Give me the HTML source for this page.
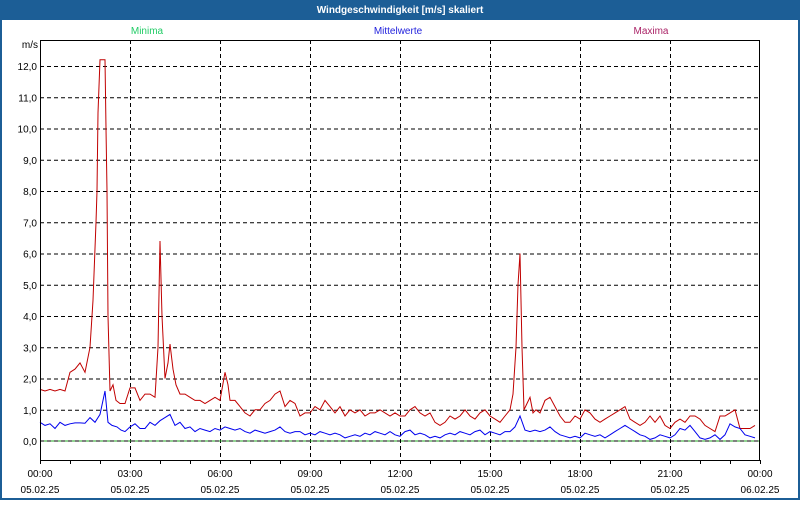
<!DOCTYPE html>
<html><head><meta charset="utf-8"><style>
body{margin:0;width:800px;height:500px;overflow:hidden;background:#fff;font-family:"Liberation Sans",sans-serif}
</style></head><body>
<svg id="s" width="800" height="500" xmlns="http://www.w3.org/2000/svg" font-family="Liberation Sans, sans-serif" font-size="10">
<rect x="0" y="0" width="800" height="500" fill="#1c5e96"/>
<rect x="2" y="20" width="796" height="478" fill="#fff"/>
<text x="400" y="13" fill="#fff" font-weight="bold" font-size="10" text-anchor="middle">Windgeschwindigkeit [m/s] skaliert</text>
<text x="147" y="34" fill="#22cc66" text-anchor="middle">Minima</text>
<text x="398" y="34" fill="#2222dd" text-anchor="middle">Mittelwerte</text>
<text x="651" y="34" fill="#aa2266" text-anchor="middle">Maxima</text>
<text x="38" y="48" text-anchor="end" fill="#000">m/s</text>
<g id="grid"></g>
<line x1="40" y1="441" x2="760" y2="441" stroke="#22aa22" stroke-width="1"/>
<line x1="40" y1="441" x2="760" y2="441" stroke="#000" stroke-dasharray="4,3"/>
<polyline id="red" fill="none" stroke="#c00000" stroke-width="1"/>
<polyline id="blue" fill="none" stroke="#0000ee" stroke-width="1"/>
<rect x="40.5" y="40.5" width="719" height="420" fill="none" stroke="#000"/>
</svg>
<script>
var g=document.getElementById('grid'),h='';
for(var v=0;v<=12;v++){var y=441-v*31.25;
 if(v>0)h+='<line x1="40" y1="'+(y+.5)+'" x2="760" y2="'+(y+.5)+'" stroke="#000" stroke-dasharray="4,3"/>';
 h+='<text x="37" y="'+(y+4)+'" text-anchor="end">'+v+',0</text>';}
var t=['00:00','03:00','06:00','09:00','12:00','15:00','18:00','21:00','00:00'];
for(var k=0;k<=8;k++){var x=40+90*k;
 if(k>0&&k<8)h+='<line x1="'+(x+.5)+'" y1="40" x2="'+(x+.5)+'" y2="460" stroke="#000" stroke-dasharray="4,3"/>';
 h+='<text x="'+x+'" y="477" text-anchor="middle">'+t[k]+'</text><text x="'+x+'" y="493" text-anchor="middle">'+(k==8?'06.02.25':'05.02.25')+'</text>';}
for(var x=40;x<=760;x+=30)h+='<line x1="'+(x+.5)+'" y1="460" x2="'+(x+.5)+'" y2="464" stroke="#000"/>';
g.innerHTML=h;
function pts(a){var s='';for(var i=0;i<a.length;i+=2){s+=a[i]+','+(441-a[i+1]*31.25).toFixed(1)+' ';}return s;}
var R=[40,1.65,45,1.6,50,1.65,55,1.6,60,1.65,65,1.6,70,2.2,75,2.3,80,2.5,85,2.2,90,3,93,4.5,96,7,97,8,98,10.5,100,12.2,105,12.2,106,10,107,8,108,4,110,1.6,113,1.8,116,1.3,120,1.2,125,1.2,130,1.7,135,1.7,140,1.3,145,1.5,150,1.5,155,1.4,158,3,160,6.4,162,4,165,2,168,2.5,170,3.1,173,2.3,176,1.8,180,1.5,185,1.5,190,1.4,195,1.3,200,1.3,205,1.2,210,1.3,215,1.4,220,1.3,225,2.2,228,1.8,230,1.3,235,1.3,240,1.1,245,0.9,250,0.8,255,1,260,1,265,1.2,270,1.3,275,1.5,280,1.6,285,1.1,290,1.3,295,1.2,300,0.8,305,0.9,310,0.9,315,1.1,320,1,325,1.3,330,1.1,335,0.9,340,1.1,345,0.8,350,1,355,0.9,360,1,365,0.8,370,0.9,375,0.9,380,1,385,0.9,390,0.8,395,0.9,400,0.8,405,0.8,410,1,415,1.1,420,0.9,425,0.8,430,0.9,435,0.6,440,0.5,445,0.6,450,0.8,455,0.7,460,0.8,465,1,470,0.8,475,0.7,480,0.9,485,1,490,0.8,495,0.7,500,0.6,505,0.8,510,1,513,1.5,516,3,518,5,520,6,522,3,524,1,527,1.2,530,1.4,533,0.9,536,1,540,0.9,545,1.3,550,1.4,555,1.1,560,0.8,565,0.6,570,0.6,575,0.8,580,0.7,585,1,590,0.9,595,0.7,600,0.6,605,0.7,610,0.8,615,0.9,620,1,625,1.1,630,0.7,635,0.6,640,0.5,645,0.6,650,0.8,655,0.6,660,0.8,665,0.5,670,0.4,675,0.6,680,0.7,685,0.6,690,0.8,695,0.8,700,0.7,705,0.5,710,0.4,715,0.3,720,0.8,725,0.8,730,0.9,735,1,740,0.4,745,0.4,750,0.4,755,0.5];
var B=[40,0.6,45,0.5,50,0.55,55,0.4,60,0.6,65,0.5,70,0.55,75,0.58,80,0.58,85,0.57,90,0.75,95,0.6,100,0.85,105,1.6,108,0.6,112,0.5,117,0.45,121,0.35,125,0.3,130,0.45,135,0.55,140,0.4,145,0.4,150,0.6,155,0.5,160,0.65,165,0.75,170,0.85,175,0.5,180,0.6,185,0.4,190,0.45,195,0.3,200,0.4,205,0.35,210,0.3,215,0.4,220,0.35,225,0.45,230,0.4,235,0.35,240,0.4,245,0.3,250,0.25,255,0.35,260,0.3,265,0.25,270,0.3,275,0.35,280,0.45,285,0.3,290,0.25,295,0.3,300,0.3,305,0.2,310,0.25,315,0.2,320,0.3,325,0.25,330,0.2,335,0.25,340,0.2,345,0.1,350,0.15,355,0.2,360,0.15,365,0.25,370,0.2,375,0.3,380,0.25,385,0.2,390,0.3,395,0.2,400,0.15,405,0.3,410,0.35,415,0.2,420,0.25,425,0.2,430,0.1,435,0.15,440,0.1,445,0.2,450,0.25,455,0.2,460,0.3,465,0.25,470,0.2,475,0.3,480,0.35,485,0.2,490,0.3,495,0.25,500,0.2,505,0.3,510,0.3,515,0.45,520,0.8,525,0.35,530,0.3,535,0.35,540,0.3,545,0.35,550,0.45,555,0.3,560,0.2,565,0.15,570,0.1,575,0.15,580,0.1,585,0.25,590,0.2,595,0.15,600,0.2,605,0.1,610,0.2,615,0.3,620,0.4,625,0.5,630,0.4,635,0.3,640,0.2,645,0.15,650,0.05,655,0.1,660,0.2,665,0.15,670,0.1,675,0.2,680,0.4,685,0.35,690,0.5,695,0.3,700,0.1,705,0.05,710,0.1,715,0.2,720,0.05,725,0.2,730,0.55,735,0.45,740,0.4,745,0.2,750,0.15,755,0.1];
document.getElementById('red').setAttribute('points',pts(R));
document.getElementById('blue').setAttribute('points',pts(B));
</script>
</body></html>
